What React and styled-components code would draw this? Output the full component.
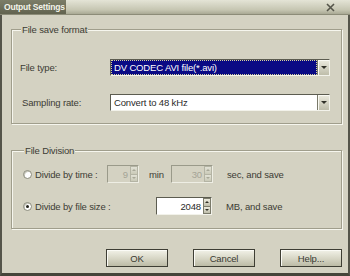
import styled, { createGlobalStyle } from "styled-components";

const Global = createGlobalStyle`
  body {
    margin: 0;
    background: #d4d2c2;
    font-family: "Liberation Sans", Arial, sans-serif;
  }
`

const Window = styled.div`
  width: 350px;
  height: 276px;
  box-sizing: border-box;
  display: flex;
  flex-direction: column;
  background: #d4d2c2;
  border-left: 2px solid #55554a;
  border-right: 2px solid #55554a;
  border-bottom: 3px solid #45453a;
  font-size: 9.5px;
  letter-spacing: -0.15px;
  color: #3c3c34;
`

const TitleBar = styled.div`
  height: 15px;
  flex: none;
  display: flex;
  align-items: stretch;
  margin: 0 -2px;
  background: linear-gradient(#e4e4d6, #c6c6b2 70%, #a9a994);
  border-bottom: 1px solid #8c8c78;
  box-sizing: border-box;
`

const TitleTab = styled.div`
  width: 66px;
  display: flex;
  align-items: center;
  padding-left: 4px;
  box-sizing: border-box;
  white-space: nowrap;
  background: linear-gradient(#7c7d68, #62634f);
  color: #f4f4ea;
  font-weight: bold;
  font-size: 8.5px;
  letter-spacing: -0.2px;
`

const TitleFill = styled.div`
  flex: 1;
  display: flex;
  justify-content: flex-end;
  align-items: center;
  padding-right: 15px;
`

const Body = styled.div`
  flex: 1;
  display: flex;
  flex-direction: column;
  padding: 8px 6px 0 9px;
`

const Group = styled.fieldset`
  margin: ${p => p.$top}px 0 0;
  padding: ${p => p.$pad};
  min-width: 0;
  border: 1px solid #a09e8c;
  box-shadow: inset 1px 1px 0 #f6f6ee, 1px 1px 0 #f6f6ee;
  display: flex;
  flex-direction: column;
  gap: ${p => p.$gap}px;
`

const Legend = styled.legend`
  padding: 0 1px;
  margin-left: 1px;
  line-height: 13px;
  background: #d4d2c2;
`

const Row = styled.div`
  display: flex;
  align-items: center;
  height: ${p => p.$h}px;
  white-space: nowrap;
`

const Label = styled.div`
  width: ${p => p.$w}px;
  padding-left: ${p => p.$indent || 0}px;
  box-sizing: border-box;
  flex: none;
`

const Combo = styled.div`
  width: 220px;
  height: 17px;
  box-sizing: border-box;
  display: flex;
  border: 1px solid;
  border-color: #5c5c50 #f2f2ea #f2f2ea #5c5c50;
  background: #fff;
`

const ComboField = styled.div`
  flex: 1;
  display: flex;
  align-items: center;
  padding-left: 3px;
  background: ${p => (p.$selected ? "#0a0a84" : "#fff")};
  color: ${p => (p.$selected ? "#fff" : "#2a2a2a")};
  outline: ${p => (p.$selected ? "1px dotted #d8d49a" : "none")};
  outline-offset: -1px;
`

const ComboButton = styled.div`
  width: 11px;
  flex: none;
  display: flex;
  align-items: center;
  justify-content: center;
  background: linear-gradient(#ecebdf, #bebdaa);
  border-left: 1px solid #7a7a6a;
  box-shadow: inset 1px 1px 0 #fafaf4;
`

const Arrow = styled.span`
  width: 0;
  height: 0;
  border-left: ${p => p.$size}px solid transparent;
  border-right: ${p => p.$size}px solid transparent;
  ${p => (p.$up ? "border-bottom" : "border-top")}: ${p => p.$size}px solid ${p => p.$color || "#303028"};
`

const Option = styled.label`
  width: ${p => p.$w}px;
  flex: none;
  display: flex;
  align-items: center;
  gap: 3px;
`

const Radio = styled.span`
  width: 9px;
  height: 9px;
  flex: none;
  border-radius: 50%;
  box-sizing: border-box;
  border: 1px solid #8a8a7a;
  background: #fff;
  box-shadow: inset 1px 1px 0 #c8c8bc;
  display: flex;
  align-items: center;
  justify-content: center;
  &::after {
    content: "";
    width: 3px;
    height: 3px;
    border-radius: 50%;
    background: ${p => (p.$checked ? "#202018" : "transparent")};
  }
`

const Spin = styled.div`
  width: ${p => p.$w}px;
  height: 18px;
  box-sizing: border-box;
  flex: none;
  display: flex;
  border: 1px solid;
  border-color: ${p => (p.$disabled ? "#9a9a8a #eeeee4 #eeeee4 #9a9a8a" : "#5c5c50 #f2f2ea #f2f2ea #5c5c50")};
  background: ${p => (p.$disabled ? "#d4d2c2" : "#fff")};
`

const SpinText = styled.div`
  flex: 1;
  display: flex;
  align-items: center;
  justify-content: flex-end;
  padding-right: 2px;
  color: ${p => (p.$disabled ? "#a4a496" : "#2a2a2a")};
`

const SpinButtons = styled.div`
  width: 8px;
  flex: none;
  display: flex;
  flex-direction: column;
`

const SpinBtn = styled.div`
  flex: 1;
  display: flex;
  align-items: center;
  justify-content: center;
  background: ${p => (p.$disabled ? "linear-gradient(#e2e2d6, #cacab8)" : "linear-gradient(#ecebdf, #bebdaa)")};
  border: 1px solid ${p => (p.$disabled ? "#b4b4a4" : "#7a7a6a")};
  margin-top: -1px;
  &:first-child {
    margin-top: 0;
  }
`

const Unit = styled.span`
  margin-left: ${p => p.$gap}px;
  width: ${p => p.$w || "auto"};
  flex: none;
`

const Buttons = styled.div`
  display: flex;
  justify-content: flex-end;
  gap: 25px;
  margin-top: 20px;
`

const Button = styled.button`
  width: 62px;
  height: 18px;
  padding: 0;
  font: inherit;
  letter-spacing: inherit;
  color: #3a3a32;
  border: 1px solid #3e3e34;
  background: linear-gradient(#f2f2e8, #d6d5c4 55%, #bcbba6);
  box-shadow: inset 1px 1px 0 #fbfbf6;
`

const SpinBox = ({ w, value, disabled }) => (
  <Spin $w={w} $disabled={disabled}>
    <SpinText $disabled={disabled}>{value}</SpinText>
    <SpinButtons>
      <SpinBtn $disabled={disabled}>
        <Arrow $up $size={2} $color={disabled ? "#a8a898" : "#303028"} />
      </SpinBtn>
      <SpinBtn $disabled={disabled}>
        <Arrow $size={2} $color={disabled ? "#a8a898" : "#303028"} />
      </SpinBtn>
    </SpinButtons>
  </Spin>
)

const App = () => {
  return (
    <Window>
      <Global />
      <TitleBar>
        <TitleTab>Output Settings</TitleTab>
        <TitleFill>
          <svg width="9" height="9" viewBox="0 0 9 9">
            <path d="M1 1L8 8M8 1L1 8" stroke="#55554a" strokeWidth="1.6" />
          </svg>
        </TitleFill>
      </TitleBar>
      <Body>
        <Group $top={0} $pad="23px 11px 12px 8px" $gap={18}>
          <Legend>File save format</Legend>
          <Row $h={17}>
            <Label $w={90}>File type:</Label>
            <Combo>
              <ComboField $selected>DV CODEC AVI file(*.avi)</ComboField>
              <ComboButton><Arrow $size={3} /></ComboButton>
            </Combo>
          </Row>
          <Row $h={17}>
            <Label $w={90} $indent={2}>Sampling rate:</Label>
            <Combo>
              <ComboField>Convert to 48 kHz</ComboField>
              <ComboButton><Arrow $size={3} /></ComboButton>
            </Combo>
          </Row>
        </Group>
        <Group $top={20} $pad="8px 8px 13px 11px" $gap={14}>
          <Legend>File Division</Legend>
          <Row $h={18}>
            <Option $w={84}><Radio />Divide by time :</Option>
            <SpinBox w={32} value="9" disabled />
            <Unit $gap={10} $w="22px">min</Unit>
            <SpinBox w={42} value="30" disabled />
            <Unit $gap={14}>sec, and save</Unit>
          </Row>
          <Row $h={18}>
            <Option $w={133}><Radio $checked />Divide by file size :</Option>
            <SpinBox w={56} value="2048" />
            <Unit $gap={14}>MB, and save</Unit>
          </Row>
        </Group>
        <Buttons>
          <Button>OK</Button>
          <Button>Cancel</Button>
          <Button>Help...</Button>
        </Buttons>
      </Body>
    </Window>
  );
}

export default App;
